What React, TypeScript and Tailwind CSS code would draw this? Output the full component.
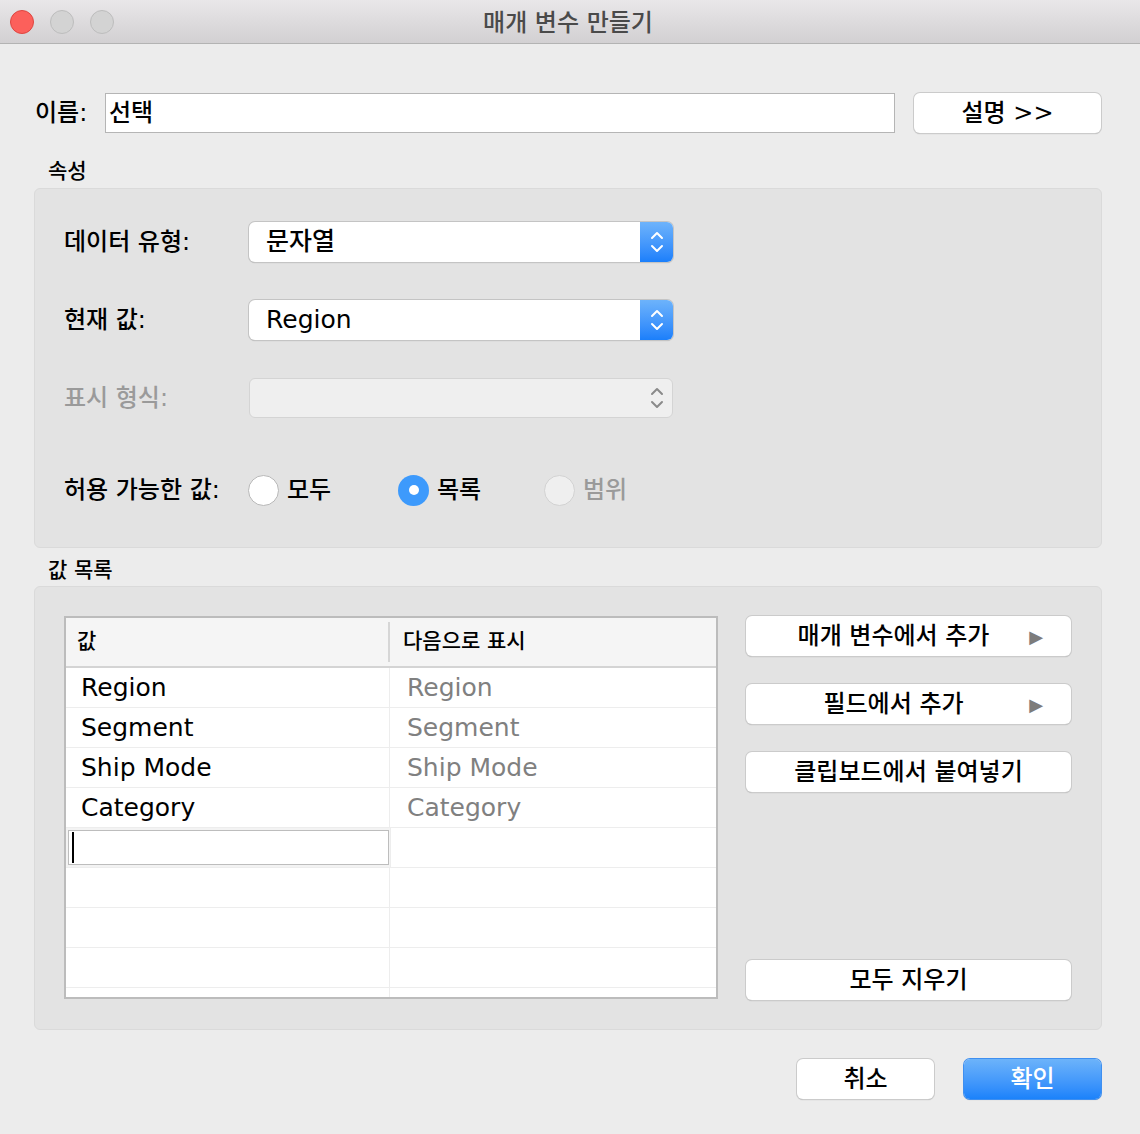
const font = { fontFamily: '"DejaVu Sans", "Noto Sans CJK KR", sans-serif' }

function Stepper({ disabled }: { disabled?: boolean }) {
  const stroke = disabled ? '#8a8a8a' : '#ffffff'
  return (
    <svg width="14" height="26" viewBox="0 0 14 26" fill="none">
      <path d="M2 9 L7 4 L12 9" stroke={stroke} strokeWidth="2" strokeLinecap="round" strokeLinejoin="round" />
      <path d="M2 17 L7 22 L12 17" stroke={stroke} strokeWidth="2" strokeLinecap="round" strokeLinejoin="round" />
    </svg>
  )
}

function Select({ value, disabled }: { value?: string; disabled?: boolean }) {
  if (disabled) {
    return (
      <div className="w-[424px] h-[40px] rounded-[6px] bg-[#efefef] border border-[#d4d4d4] flex items-center justify-end pr-[8px]">
        <Stepper disabled />
      </div>
    )
  }
  return (
    <div className="w-[424px] h-[40px] rounded-[6px] bg-white flex overflow-hidden shadow-[0_0_0_1px_#c4c4c4,0_1px_1px_rgba(0,0,0,0.25)]">
      <div className="flex-1 flex items-center pl-[17px] text-[25px] text-black">{value}</div>
      <div className="w-[33px] h-full bg-gradient-to-b from-[#6db3fb] to-[#1a7ffb] flex items-center justify-center">
        <Stepper />
      </div>
    </div>
  )
}

function Button({ children, className = '' }: { children: React.ReactNode; className?: string }) {
  return (
    <div
      className={`h-[40px] rounded-[6px] bg-white flex items-center justify-center text-[24px] text-black shadow-[0_0_0_1px_#cbcbcb,0_1px_1px_rgba(0,0,0,0.3)] ${className}`}
    >
      {children}
    </div>
  )
}

function Radio({ state }: { state: 'off' | 'on' | 'disabled' }) {
  if (state === 'on') {
    return (
      <div className="w-[31px] h-[31px] rounded-full bg-[#3d9afc] flex items-center justify-center">
        <div className="w-[10px] h-[10px] rounded-full bg-white" />
      </div>
    )
  }
  return (
    <div
      className={`w-[31px] h-[31px] rounded-full border ${
        state === 'disabled' ? 'bg-[#efefef] border-[#d2d2d2]' : 'bg-white border-[#b8b8b8]'
      }`}
    />
  )
}

const rows = ['Region', 'Segment', 'Ship Mode', 'Category']

export default function App() {
  return (
    <div className="w-[1140px] h-[1134px] bg-[#ececec] text-black font-medium" style={font}>
      {/* title bar */}
      <div className="relative h-[44px] bg-gradient-to-b from-[#e9e7e9] to-[#d2d0d2] border-b border-[#b3b3b3] flex items-center justify-center">
        <div className="absolute left-[10px] top-[10px] flex gap-[16px]">
          <div className="w-[24px] h-[24px] rounded-full bg-[#fc605b] border border-[#de4640]" />
          <div className="w-[24px] h-[24px] rounded-full bg-[#d3d3d3] border border-[#bdbdbd]" />
          <div className="w-[24px] h-[24px] rounded-full bg-[#d3d3d3] border border-[#bdbdbd]" />
        </div>
        <div className="text-[24px] leading-[30px] text-[#4a4a4a] pr-[4px] pt-[2px]">매개 변수 만들기</div>
      </div>

      <div className="pl-[34px] pr-[38px]">
        {/* name row */}
        <div className="mt-[49px] h-[40px] flex items-center">
          <div className="w-[71px] pl-[1px] text-[24px]">이름:</div>
          <div className="w-[790px] h-[40px] bg-white border border-[#b5b5b5] flex items-center pl-[3px] text-[24px]">
            선택
          </div>
          <Button className="ml-[19px] w-[187px]">설명 &gt;&gt;</Button>
        </div>

        {/* properties */}
        <div className="h-[55px] pt-[27px] pl-[14px] text-[21px] leading-[22px]">속성</div>
        <div className="h-[360px] rounded-[6px] bg-[#e3e3e3] border border-[#dadada] pl-[29px] pt-[33px]">
          <div className="flex items-center h-[40px]">
            <div className="w-[185px] text-[24px]">데이터 유형:</div>
            <Select value="문자열" />
          </div>
          <div className="flex items-center h-[40px] mt-[38px]">
            <div className="w-[185px] text-[24px]">현재 값:</div>
            <Select value="Region" />
          </div>
          <div className="flex items-center h-[40px] mt-[38px]">
            <div className="w-[185px] text-[24px] text-[#9a9a9a]">표시 형식:</div>
            <Select disabled />
          </div>
          <div className="flex items-center h-[40px] mt-[52px]">
            <div className="w-[184px] text-[24px]">허용 가능한 값:</div>
            <div className="w-[150px] flex items-center gap-[8px]">
              <Radio state="off" />
              <span className="text-[24px]">모두</span>
            </div>
            <div className="w-[146px] flex items-center gap-[8px]">
              <Radio state="on" />
              <span className="text-[24px]">목록</span>
            </div>
            <div className="flex items-center gap-[8px]">
              <Radio state="disabled" />
              <span className="text-[24px] text-[#9a9a9a]">범위</span>
            </div>
          </div>
        </div>

        {/* list of values */}
        <div className="h-[38px] pt-[11px] pl-[14px] text-[21px] leading-[22px]">값 목록</div>
        <div className="h-[444px] rounded-[6px] bg-[#e3e3e3] border border-[#dadada] pl-[29px] pt-[29px] flex">
          <div className="w-[654px] h-[383px] border-2 border-[#bcbcbc] bg-white overflow-hidden">
            <div className="h-[50px] bg-[#f5f5f5] border-b-2 border-[#d4d4d4] flex items-center">
              <div className="w-[324px] h-[40px] border-r-2 border-[#d6d6d6] flex items-center pl-[11px] text-[21px]">값</div>
              <div className="pl-[13px] text-[21px]">다음으로 표시</div>
            </div>
            {rows.map((r) => (
              <div key={r} className="h-[40px] flex border-b border-[#ededed]">
                <div className="w-[324px] border-r border-[#ededed] flex items-center pl-[15px] text-[25px]">{r}</div>
                <div className="flex-1 flex items-center pl-[17px] text-[25px] text-[#808080]">{r}</div>
              </div>
            ))}
            <div className="h-[40px] flex border-b border-[#ededed] bg-[#f3f3f3]">
              <div className="w-[324px] p-[2px] pr-[1px]">
                <div className="h-full bg-white border border-[#bdbdbd] flex items-center pl-[3px]">
                  <div className="w-[2px] h-[31px] bg-black" />
                </div>
              </div>
              <div className="flex-1 bg-white border-l border-[#ededed]" />
            </div>
            {[1, 2, 3, 4].map((i) => (
              <div key={i} className="h-[40px] flex border-b border-[#ededed]">
                <div className="w-[324px] border-r border-[#ededed]" />
                <div className="flex-1" />
              </div>
            ))}
          </div>

          <div className="ml-[28px] w-[325px] flex flex-col">
            <Button className="relative pr-[30px]">
              <span>매개 변수에서 추가</span>
              <span className="absolute right-[28px] text-[18px] text-[#7c7c7c]">▶</span>
            </Button>
            <Button className="relative pr-[30px] mt-[28px]">
              <span>필드에서 추가</span>
              <span className="absolute right-[28px] text-[18px] text-[#7c7c7c]">▶</span>
            </Button>
            <Button className="mt-[28px]">클립보드에서 붙여넣기</Button>
            <Button className="mt-[168px]">모두 지우기</Button>
          </div>
        </div>

        {/* footer buttons */}
        <div className="mt-[29px] flex justify-end gap-[30px] pr-[1px]">
          <Button className="w-[137px]">취소</Button>
          <div className="w-[137px] h-[40px] rounded-[6px] bg-gradient-to-b from-[#6cb3fa] to-[#1a82fb] flex items-center justify-center text-[24px] text-white shadow-[0_0_0_1px_#3f8ff0,0_1px_1px_rgba(0,0,0,0.25)]">
            확인
          </div>
        </div>
      </div>
    </div>
  )
}
